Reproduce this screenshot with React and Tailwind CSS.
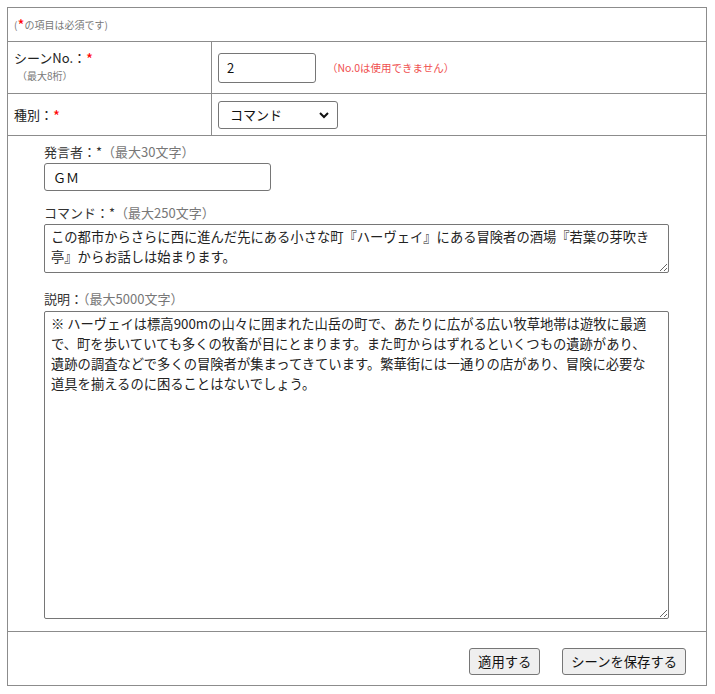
import React from 'react';

const Req = () => <span className="text-[#ff0000] text-[15px] leading-none align-[-2px]">*</span>;

const commandText =
  'この都市からさらに西に進んだ先にある小さな町『ハーヴェイ』にある冒険者の酒場『若葉の芽吹き\n亭』からお話しは始まります。';

const descText =
  '※ ハーヴェイは標高900mの山々に囲まれた山岳の町で、あたりに広がる広い牧草地帯は遊牧に最適\nで、町を歩いていても多くの牧畜が目にとまります。また町からはずれるといくつもの遺跡があり、\n遺跡の調査などで多くの冒険者が集まってきています。繁華街には一通りの店があり、冒険に必要な\n道具を揃えるのに困ることはないでしょう。';

export default function App() {
  return (
    <div
      className="bg-white min-h-screen pt-[7px] pl-[7px] text-[#222]"
      style={{ fontFamily: '"Noto Sans CJK JP", "Noto Sans", sans-serif' }}
    >
      <table className="w-[700px] border-collapse text-[13px]">
        <tbody>
          <tr className="h-[34px]">
            <td colSpan={2} className="border border-[#8c8c8c] px-[6px] text-[10px] text-[#777]">
              (<Req />の項目は必須です)
            </td>
          </tr>
          <tr className="h-[52px]">
            <td className="w-[204px] border border-[#8c8c8c] px-[6px] align-top pt-[6px]">
              <div className="leading-5">
                シーンNo.：<Req />
              </div>
              <div className="text-[10px] text-[#777] pl-[3px] leading-4">（最大8桁）</div>
            </td>
            <td className="border border-[#8c8c8c] px-[6px]">
              <div className="flex items-center gap-[11px]">
                <input
                  type="text"
                  defaultValue="2"
                  className="w-[98px] h-[30px] border border-[#767676] rounded-[3px] px-[8px] text-[13px] text-[#111] bg-white"
                />
                <span className="text-[10.5px] text-[#f05050]">（No.0は使用できません）</span>
              </div>
            </td>
          </tr>
          <tr className="h-[42px]">
            <td className="border border-[#8c8c8c] px-[6px]">
              種別：<Req />
            </td>
            <td className="border border-[#8c8c8c] px-[6px]">
              <div className="relative w-[120px] h-[28px]">
                <select
                  defaultValue="command"
                  className="appearance-none w-full h-full border border-[#767676] rounded-[3px] pl-[11px] text-[13px] text-[#111] bg-white"
                >
                  <option value="command">コマンド</option>
                  <option value="talk">会話</option>
                </select>
                <svg
                  className="absolute right-[9px] top-[10px] pointer-events-none"
                  width="10"
                  height="8"
                  viewBox="0 0 10 8"
                >
                  <path d="M1 2 L5 6 L9 2" fill="none" stroke="#111" strokeWidth="2" />
                </svg>
              </div>
            </td>
          </tr>
          <tr>
            <td colSpan={2} className="border border-[#8c8c8c] pl-[36px] pr-[37px] pt-[6px] pb-[12px]">
              <div className="flex flex-col">
                <div className="leading-5 text-[#333]">
                  発言者：*<span className="text-[#777]">（最大30文字）</span>
                </div>
                <input
                  type="text"
                  defaultValue="ＧＭ"
                  className="mt-[1px] w-[227px] h-[28px] border border-[#767676] rounded-[3px] px-[8px] text-[13px] text-[#111] bg-white"
                />
                <div className="mt-[12px] leading-5 text-[#333]">
                  コマンド：*<span className="text-[#777]">（最大250文字）</span>
                </div>
                <textarea
                  defaultValue={commandText}
                  className="mt-[1px] w-[625px] h-[49px] border border-[#767676] rounded-[2px] pl-[6px] pr-[2px] py-[2px] text-[13.3px] leading-5 text-[#222] bg-white block"
                />
                <div className="mt-[16px] leading-5 text-[#333]">
                  説明：<span className="text-[#777]">（最大5000文字）</span>
                </div>
                <textarea
                  defaultValue={descText}
                  className="mt-[2px] w-[625px] h-[308px] border border-[#767676] rounded-[2px] pl-[6px] pr-[2px] py-[2px] text-[13.3px] leading-5 text-[#222] bg-white block"
                />
              </div>
            </td>
          </tr>
          <tr className="h-[54px]">
            <td colSpan={2} className="border border-[#8c8c8c] pr-[20px] pt-[6px]">
              <div className="flex justify-end gap-[22px]">
                <button className="h-[27px] px-[8px] border border-[#767676] rounded-[3px] bg-[#efefef] text-[13.3px] text-[#111]">
                  適用する
                </button>
                <button className="h-[27px] px-[8px] border border-[#767676] rounded-[3px] bg-[#efefef] text-[13.3px] text-[#111]">
                  シーンを保存する
                </button>
              </div>
            </td>
          </tr>
        </tbody>
      </table>
    </div>
  );
}
